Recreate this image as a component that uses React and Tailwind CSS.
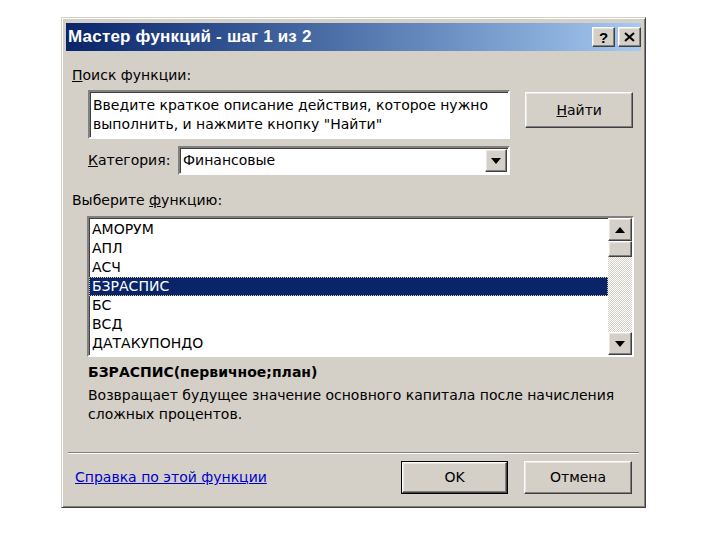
import React from 'react';

const FONT = { fontFamily: '"DejaVu Sans", Verdana, sans-serif' };
const TITLE_FONT = { fontFamily: '"Liberation Sans", Arial, sans-serif' };

// классическая выпуклая рамка (кнопки)
const raised = 'border border-t-white border-l-white border-r-[#404040] border-b-[#404040] shadow-[inset_-1px_-1px_0_#808080,inset_1px_1px_0_#e8e6e0]';
// утопленная рамка (поля)
const sunken = 'border-2 border-t-[#808080] border-l-[#808080] border-r-white border-b-white shadow-[inset_1px_1px_0_#404040]';

const ITEMS = ['АМОРУМ', 'АПЛ', 'АСЧ', 'БЗРАСПИС', 'БС', 'ВСД', 'ДАТАКУПОНДО'];
const SELECTED = 'БЗРАСПИС';

function ArrowDown() {
  return (
    <svg width="10" height="6" viewBox="0 0 10 6">
      <path d="M0 0h10L5 6z" fill="#000" />
    </svg>
  );
}

function ArrowUp() {
  return (
    <svg width="10" height="6" viewBox="0 0 10 6">
      <path d="M0 6h10L5 0z" fill="#000" />
    </svg>
  );
}

function Button({ children, isDefault, className = '' }) {
  if (isDefault) {
    return (
      <div className={`border border-black ${className}`}>
        <div className={`${raised} h-full flex items-center justify-center bg-[#d4d0c8] text-black`}>
          {children}
        </div>
      </div>
    );
  }
  return (
    <div className={`${raised} flex items-center justify-center bg-[#d4d0c8] text-black ${className}`}>
      {children}
    </div>
  );
}

export default function App() {
  return (
    <div className="min-h-screen bg-white pt-[17px] pl-[61px] text-[14px] whitespace-nowrap" style={FONT}>
      <div className="w-[585px] h-[491px] bg-[#d4d0c8] border border-t-[#d4d0c8] border-l-[#d4d0c8] border-r-[#404040] border-b-[#404040] shadow-[inset_1px_1px_0_#fff,inset_-1px_-1px_0_#808080] p-[4px] flex flex-col">
        {/* заголовок окна */}
        <div className="mt-[1px] h-[28px] bg-gradient-to-r from-[#0a246a] to-[#a6caf0] flex items-center pl-[2px] pr-[0px]">
          <span className="text-white font-bold text-[17px] tracking-[0.2px]" style={TITLE_FONT}>Мастер функций - шаг 1 из 2</span>
          <div className="ml-auto flex gap-[3px]">
            <div className={`${raised} w-[23px] h-[20px] bg-[#d4d0c8] flex items-center justify-center text-[15px] font-bold leading-none`} style={TITLE_FONT}>?</div>
            <div className={`${raised} w-[23px] h-[20px] bg-[#d4d0c8] flex items-center justify-center`}>
              <svg width="11" height="10" viewBox="0 0 11 10">
                <path d="M1 1l9 8M10 1l-9 8" stroke="#000" strokeWidth="2" />
              </svg>
            </div>
          </div>
        </div>

        <div className="pl-[6px] pr-[8px] text-black">
          <div className="mt-[15px] leading-[18px]"><span className="underline">П</span>оиск функции:</div>

          <div className="mt-[6px] flex items-start">
            <div className={`${sunken} ml-[16px] w-[424px] h-[49px] bg-white px-[3px] pt-[4px] leading-[19px]`}>
              <div>Введите краткое описание действия, которое нужно</div>
              <div>выполнить, и нажмите кнопку "Найти"</div>
            </div>
            <Button className="ml-[15px] mt-[2px] w-[108px] h-[36px]">
              <span><span className="underline">Н</span>айти</span>
            </Button>
          </div>

          <div className="mt-[7px] flex items-center">
            <span className="ml-[16px] w-[90px]"><span className="underline">К</span>атегория:</span>
            <div className={`${sunken} w-[332px] h-[29px] bg-white flex items-center pl-[3px] pr-[1px]`}>
              <span>Финансовые</span>
              <div className={`${raised} ml-auto w-[22px] h-[23px] bg-[#d4d0c8] flex items-center justify-center`}>
                <ArrowDown />
              </div>
            </div>
          </div>

          <div className="mt-[16px] leading-[18px]">Выберите <span className="underline">ф</span>ункцию:</div>

          <div className={`${sunken} mt-[7px] ml-[15px] w-[547px] h-[141px] bg-white flex`}>
            <div className="flex-1 pt-[2px]">
              {ITEMS.map((item) => (
                <div
                  key={item}
                  className={`h-[19px] leading-[19px] pl-[3px] ${item === SELECTED ? 'bg-[#0a246a] text-white outline-1 outline-dotted outline-[#e0d080] -outline-offset-1' : ''}`}
                >
                  {item}
                </div>
              ))}
            </div>
            <div className="w-[24px] flex flex-col bg-[repeating-conic-gradient(#d4d0c8_0_25%,#ffffff_0_50%)] bg-[length:2px_2px]">
              <div className={`${raised} h-[23px] bg-[#d4d0c8] flex items-center justify-center`}><ArrowUp /></div>
              <div className={`${raised} h-[16px] bg-[#d4d0c8]`} />
              <div className="flex-1" />
              <div className={`${raised} h-[23px] bg-[#d4d0c8] flex items-center justify-center`}><ArrowDown /></div>
            </div>
          </div>

          <div className="mt-[6px] ml-[16px] font-bold leading-[18px]">БЗРАСПИС(первичное;план)</div>
          <div className="mt-[5px] ml-[16px] leading-[19px]">
            <div>Возвращает будущее значение основного капитала после начисления</div>
            <div>сложных процентов.</div>
          </div>
        </div>

        <div className="mt-[28px] mx-[2px] h-[2px] border-t border-t-[#808080] border-b border-b-white" />

        <div className="mt-[7px] flex items-center">
          <span className="ml-[9px] text-[#0000cc] underline">Справка по этой функции</span>
          <Button isDefault className="ml-auto w-[107px] h-[33px]">OK</Button>
          <Button className="ml-[16px] mr-[9px] w-[108px] h-[33px]">Отмена</Button>
        </div>
      </div>
    </div>
  );
}
